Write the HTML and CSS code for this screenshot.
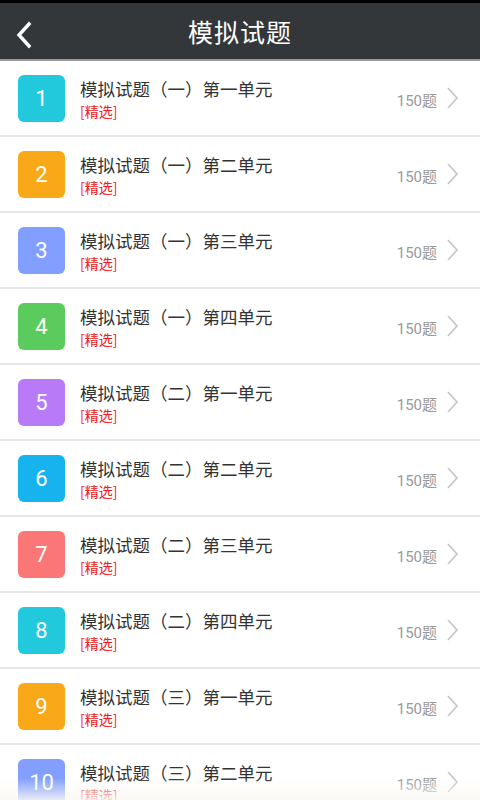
FILE: index.html
```html
<!DOCTYPE html>
<html>
<head>
<meta charset="utf-8">
<link rel="stylesheet" href="styles.css">
</head>
<body>
<div class="screen">
  <div class="status"></div>
  <header class="header">
    <svg class="back" width="20" height="28" viewBox="0 0 20 28"><path d="M15 3 L5 14 L15 25" fill="none" stroke="#fff" stroke-width="3.4" stroke-linecap="square"/></svg>
    <h1 class="title">模拟试题</h1>
  </header>
  <ul class="list">
    <li class="row"><span class="badge c1">1</span><div class="text"><div class="name">模拟试题（一）第一单元</div><div class="tag">[精选]</div></div><span class="count">150题</span><svg class="chev" width="14" height="24" viewBox="0 0 14 24"><path d="M2 2 L11 12 L2 22" fill="none" stroke="#c4c4c4" stroke-width="1.6"/></svg></li>
    <li class="row"><span class="badge c2">2</span><div class="text"><div class="name">模拟试题（一）第二单元</div><div class="tag">[精选]</div></div><span class="count">150题</span><svg class="chev" width="14" height="24" viewBox="0 0 14 24"><path d="M2 2 L11 12 L2 22" fill="none" stroke="#c4c4c4" stroke-width="1.6"/></svg></li>
    <li class="row"><span class="badge c3">3</span><div class="text"><div class="name">模拟试题（一）第三单元</div><div class="tag">[精选]</div></div><span class="count">150题</span><svg class="chev" width="14" height="24" viewBox="0 0 14 24"><path d="M2 2 L11 12 L2 22" fill="none" stroke="#c4c4c4" stroke-width="1.6"/></svg></li>
    <li class="row"><span class="badge c4">4</span><div class="text"><div class="name">模拟试题（一）第四单元</div><div class="tag">[精选]</div></div><span class="count">150题</span><svg class="chev" width="14" height="24" viewBox="0 0 14 24"><path d="M2 2 L11 12 L2 22" fill="none" stroke="#c4c4c4" stroke-width="1.6"/></svg></li>
    <li class="row"><span class="badge c5">5</span><div class="text"><div class="name">模拟试题（二）第一单元</div><div class="tag">[精选]</div></div><span class="count">150题</span><svg class="chev" width="14" height="24" viewBox="0 0 14 24"><path d="M2 2 L11 12 L2 22" fill="none" stroke="#c4c4c4" stroke-width="1.6"/></svg></li>
    <li class="row"><span class="badge c6">6</span><div class="text"><div class="name">模拟试题（二）第二单元</div><div class="tag">[精选]</div></div><span class="count">150题</span><svg class="chev" width="14" height="24" viewBox="0 0 14 24"><path d="M2 2 L11 12 L2 22" fill="none" stroke="#c4c4c4" stroke-width="1.6"/></svg></li>
    <li class="row"><span class="badge c7">7</span><div class="text"><div class="name">模拟试题（二）第三单元</div><div class="tag">[精选]</div></div><span class="count">150题</span><svg class="chev" width="14" height="24" viewBox="0 0 14 24"><path d="M2 2 L11 12 L2 22" fill="none" stroke="#c4c4c4" stroke-width="1.6"/></svg></li>
    <li class="row"><span class="badge c1">8</span><div class="text"><div class="name">模拟试题（二）第四单元</div><div class="tag">[精选]</div></div><span class="count">150题</span><svg class="chev" width="14" height="24" viewBox="0 0 14 24"><path d="M2 2 L11 12 L2 22" fill="none" stroke="#c4c4c4" stroke-width="1.6"/></svg></li>
    <li class="row"><span class="badge c2">9</span><div class="text"><div class="name">模拟试题（三）第一单元</div><div class="tag">[精选]</div></div><span class="count">150题</span><svg class="chev" width="14" height="24" viewBox="0 0 14 24"><path d="M2 2 L11 12 L2 22" fill="none" stroke="#c4c4c4" stroke-width="1.6"/></svg></li>
    <li class="row"><span class="badge c3">10</span><div class="text"><div class="name">模拟试题（三）第二单元</div><div class="tag">[精选]</div></div><span class="count">150题</span><svg class="chev" width="14" height="24" viewBox="0 0 14 24"><path d="M2 2 L11 12 L2 22" fill="none" stroke="#c4c4c4" stroke-width="1.6"/></svg></li>
  </ul>
  <div class="fade"></div>
</div>
</body>
</html>
```
FILE: styles.css
```css
* { box-sizing: border-box; }
html, body { margin: 0; padding: 0; }
body { background: #fff; font-family: Roboto, "Noto Sans CJK SC", sans-serif; }
.screen { width: 480px; height: 800px; overflow: hidden; position: relative; background: #fff; }
.status { height: 3px; background: #000; }
.header { height: 58px; background: #33373a; border-bottom: 2px solid #9a9b9c; display: flex; align-items: center; justify-content: center; position: relative; }
.back { position: absolute; left: 14px; top: 18px; }
.title { margin: 0; color: #fff; font-size: 25px; font-weight: normal; font-family: "Noto Sans CJK SC", sans-serif; letter-spacing: 1px; }
.list { list-style: none; margin: 0; padding: 0; }
.row { height: 76px; border-bottom: 2px solid #e6e6e6; display: flex; align-items: center; padding: 0 20px 0 18px; }
.badge { width: 47px; height: 47px; border-radius: 6px; color: #fff; font-size: 22px; display: flex; align-items: center; justify-content: center; flex: none; font-family: Roboto, sans-serif; }
.c1 { background: #22c8dc; }
.c2 { background: #f9a817; }
.c3 { background: #829eff; }
.c4 { background: #5bcb5e; }
.c5 { background: #b97af8; }
.c6 { background: #16b3ef; }
.c7 { background: #fb7677; }
.text { flex: 1; margin-left: 15px; display: flex; flex-direction: column; }
.name { font-size: 17.5px; color: #333; line-height: 25px; font-family: "Noto Sans CJK SC", sans-serif; }
.tag { font-size: 14px; color: #f02020; line-height: 20px; font-family: "Noto Sans CJK SC", sans-serif; }
.count { font-size: 15px; color: #999; margin-right: 9px; margin-top: 2px; }
.chev { flex: none; }
.fade { position: absolute; left: 0; right: 0; bottom: 0; height: 22px; background: linear-gradient(to bottom, rgba(250,248,244,0), rgba(250,248,244,0.85)); }
```
